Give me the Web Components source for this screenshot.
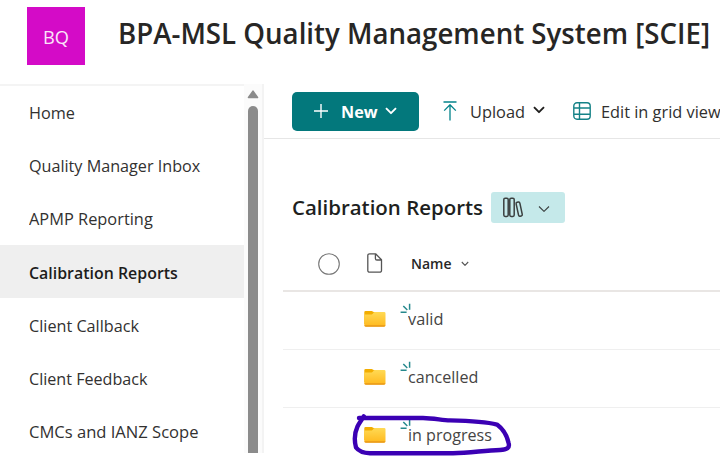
<!DOCTYPE html>
<html lang="en">
<head>
<meta charset="utf-8">
<title>Calibration Reports</title>
<style>
body{margin:0;background:#fff;font-family:"Open Sans","Noto Sans",sans-serif;overflow:hidden}
</style>
</head>
<body>
<site-page></site-page>
<script>
const define = (name, html, setup) => customElements.define(name, class extends HTMLElement {
  connectedCallback() {
    if (this.shadowRoot) return;
    this.attachShadow({mode: 'open'}).innerHTML = html;
    if (setup) setup(this, this.shadowRoot);
  }
});

// A one-line label condensed or widened to the width given in "w".
define('fit-text', `<style>
:host{display:block;flex:none;white-space:nowrap;line-height:24px}
span{display:inline-block;transform-origin:0 50%}
</style><span></span>`, (el, root) => {
  const s = root.querySelector('span'), w = +el.getAttribute('w');
  s.textContent = el.getAttribute('label');
  el.style.width = w + 'px';
  s.style.transform = `scaleX(${w / s.getBoundingClientRect().width})`;
});

const icons = {
  plus: [16, 16, '<path d="M8 1v14M1 8h14" stroke-width="1.4"/>'],
  chevron: [12, 8, '<path d="M1 1.2 6 6.2 11 1.2" stroke-width="1.9"/>'],
  thin: [12, 8, '<path d="M1 1.5 6 6.3 11 1.5" stroke-width="1.1"/>'],
  small: [8, 6, '<path d="M.8 1 4 4.3 7.2 1" stroke-width="1.1"/>'],
  upload: [14, 20, '<path d="M.5 1h13M7 19.5V4M1.2 9.6 7 3.8l5.8 5.8" stroke-width="1.3"/>'],
  grid: [18, 18, '<rect x=".8" y=".8" width="16.4" height="16.4" rx="3.2" stroke-width="1.4"/><path d="M6.5 1v16M1 6h16M1 12.2h16" stroke-width="1.4"/>'],
  books: [21, 21, '<g stroke-width="1.5"><rect x=".8" y="1.2" width="4.4" height="18.2" rx="1.3"/><rect x="6.8" y="1.2" width="4.4" height="18.2" rx="1.3"/><rect x="14.3" y="5" width="3.8" height="14.2" rx="1.3" transform="rotate(-12 16.2 12.1)"/></g>'],
  file: [16, 20, '<path d="M2.6.8h6l5.9 6v10.6a1.8 1.8 0 0 1-1.8 1.8H2.6A1.8 1.8 0 0 1 .8 17.4V2.6A1.8 1.8 0 0 1 2.6.8ZM8.4 1v4.4a1.6 1.6 0 0 0 1.6 1.6h4.4" stroke-width="1.3"/>'],
  circle: [22, 22, '<circle cx="11" cy="11" r="10.3" stroke-width="1.1"/>'],
  folder: [22, 18, '<defs><linearGradient id="g" x1="0" y1="0" x2="0" y2="1"><stop offset="0" stop-color="#ffda55"/><stop offset="1" stop-color="#ffb91e"/></linearGradient></defs><g stroke="none"><path d="M.3 2.3Q.3 1 1.6 1h6.1q.8 0 1.3.7L10 2H20v12H.3z" fill="#f2ad00"/><path d="M.3 4.4h7.5q.7 0 1.2-.8l.7-1.2q.3-.5 1-.5h9.5q1.3 0 1.3 1.3v12q0 1.3-1.3 1.3H1.6Q.3 16.5.3 15.2z" fill="url(#g)"/><path d="M.4 15.3h21q-.2 1.4-1.3 1.4H1.7Q.6 16.7.4 15.3z" fill="#e99819"/></g>'],
  spark: [12, 12, '<path d="M.6 9.3h6M3.3 3l4 4M9.6.8v6" stroke-width="1.5"/>'],
  up: [12, 9, '<path d="M6 1.2 10.5 7.5H1.5z" fill="#8b8b8b" stroke="#8b8b8b" stroke-width="1.6"/>']
};
define('ui-icon', `<style>:host{display:block;flex:none}svg{display:block;fill:none;stroke:currentColor;stroke-width:1.2;stroke-linejoin:round}</style>`, (el, root) => {
  const [w, h, d] = icons[el.getAttribute('name')];
  root.innerHTML += `<svg width="${w}" height="${h}" viewBox="0 0 ${w} ${h}">${d}</svg>`;
});

define('site-header', `<style>
:host{display:flex;height:84px;box-sizing:border-box;padding-left:27px;align-items:flex-start}
.logo{flex:none;width:58px;height:58px;margin-top:7px;background:#d40bc7;color:#fbe3f9;display:flex;align-items:center;justify-content:center;font-size:18.3px;padding-top:2px;box-sizing:border-box}
.title{font-size:28.8px;font-weight:600;color:#272625;margin:21px 0 0 33.4px}
</style><div class="logo"><fit-text w="26" label="BQ"></fit-text></div>
<fit-text class="title" w="592" label="BPA-MSL Quality Management System [SCIE]"></fit-text>`);

define('nav-item', `<style>
:host{display:flex;align-items:center;height:53.2px;padding:2.2px 0 0 28.8px;font-size:16.5px;color:#323130;box-sizing:border-box}
:host([selected]){background:#efefef;font-weight:600;color:#1d1c1b}
</style><slot></slot>`);

define('site-nav', `<style>
:host{display:grid;grid-template-columns:244px 18px;height:369px;overflow:hidden;border-right:2px solid #f3f3f3;box-sizing:border-box}
nav{border-top:2px solid #f4f4f4;height:367px;overflow:hidden}
nav-item:first-child{margin-top:-.6px}
.bar{background:#fbfbfb;display:flex;flex-direction:column;align-items:center;padding-top:6px}
.thumb{width:10.6px;flex:1;margin-top:7px;background:#8b8b8b;border-radius:5px 5px 0 0}
</style><nav>
<nav-item><fit-text w="46" label="Home"></fit-text></nav-item>
<nav-item><fit-text w="171.2" label="Quality Manager Inbox"></fit-text></nav-item>
<nav-item><fit-text w="123.8" label="APMP Reporting"></fit-text></nav-item>
<nav-item selected><fit-text w="148.8" label="Calibration Reports"></fit-text></nav-item>
<nav-item><fit-text w="110" label="Client Callback"></fit-text></nav-item>
<nav-item><fit-text w="118.5" label="Client Feedback"></fit-text></nav-item>
<nav-item><fit-text w="169.5" label="CMCs and IANZ Scope"></fit-text></nav-item>
</nav><div class="bar"><ui-icon name="up"></ui-icon><div class="thumb"></div></div>`);

define('command-bar', `<style>
:host{display:flex;align-items:center;height:54.5px;padding:1px 0 0 28px;box-sizing:border-box;border-bottom:1.5px solid #e6e6e6;font-size:16.5px;color:#302f2e}
.new{flex:none;display:flex;align-items:center;width:127px;height:39px;box-sizing:border-box;padding-left:21px;background:#03787c;color:#fff;border-radius:5px;font-weight:700}
.new fit-text{margin:2px 7.5px 0 11.5px}.new ui-icon{margin-top:-1px}
.up{color:#03838a;margin-left:24px}.t{margin:2px 0 0 12.5px}
.ch{margin:-3px 0 0 8.5px;color:#201f1e}.grid{color:#158287;margin-left:28px}
.e{margin-left:10px}
</style><div class="new"><ui-icon name="plus"></ui-icon><fit-text w="36.5" label="New"></fit-text><ui-icon name="chevron"></ui-icon></div>
<ui-icon class="up" name="upload"></ui-icon><fit-text class="t" w="55" label="Upload"></fit-text><ui-icon class="ch" name="chevron"></ui-icon>
<ui-icon class="grid" name="grid"></ui-icon><fit-text class="t e" w="119.6" label="Edit in grid view"></fit-text>`);

define('list-title', `<style>
:host{display:flex;align-items:center;padding:53px 0 0 27.6px;height:32px;font-size:20.3px;font-weight:600;color:#201f1e}
.view{flex:none;display:flex;align-items:center;width:74px;height:31px;box-sizing:border-box;margin-left:8.6px;padding-left:12px;background:#c5e9ea;border-radius:3px;color:#3b4040}
.view ui-icon+ui-icon{margin:2px 0 0 13.6px}
.head{margin-top:-2px}
</style><fit-text class="head" w="191" label="Calibration Reports"></fit-text><div class="view"><ui-icon name="books"></ui-icon><ui-icon name="thin"></ui-icon></div>`);

define('list-head', `<style>
:host{display:flex;align-items:center;height:68.2px;box-sizing:border-box;margin-left:19px;padding:14px 0 0 35px;border-bottom:2px solid #e9e6e4;font-size:14.6px;font-weight:600;color:#282726}
.c{color:#767676}.f{color:#555;margin:-1px 0 0 26.5px}fit-text{margin:-1px 0 0 28.4px}.s{color:#555;margin:1px 0 0 9.5px}
</style><ui-icon class="c" name="circle"></ui-icon><ui-icon class="f" name="file"></ui-icon><fit-text w="40.5" label="Name"></fit-text><ui-icon class="s" name="small"></ui-icon>`);

define('list-row', `<style>
:host{display:flex;align-items:center;height:58.1px;box-sizing:border-box;margin-left:19px;padding-left:80.6px;border-bottom:1px solid #efefef;font-size:16.2px;color:#454443}
:host(:last-of-type){border-color:transparent}
.sp{color:#26898d;margin:-22px -3.3px 0 14px}
ui-icon:first-of-type{margin-top:-3px}
::slotted(fit-text){margin-top:-3px}
</style><ui-icon name="folder"></ui-icon><ui-icon class="sp" name="spark"></ui-icon><slot></slot>`);

// Freehand loop drawn over the last row.
define('ink-mark', `<style>
:host{position:absolute;left:350px;top:412px;width:164px;height:45px;pointer-events:none}
svg{display:block}path{fill:none;stroke:#3b00b4;stroke-width:4.4;stroke-linecap:round;stroke-linejoin:round}
</style><svg width="164" height="45" viewBox="0 0 164 45"><path d="M9 6H73C84 6.2 92 8.2 100 8.4 118 8.8 137 10 147 12.6 153 17 157 24 158.6 31 160 36 157 37.8 150 38 134 38.6 120 40.8 103 41.2H20C14 41 9 39.6 6 35.5 4 28 4.5 21 7.5 14.5 9.5 10.5 12 7.5 13.8 4.3"/></svg>`);

define('site-page', `<style>
:host{display:block;width:720px;height:457px;overflow:hidden;position:relative}
.body{display:grid;grid-template-columns:263px 457px;height:373px}
site-nav{width:264px}
main{min-width:0;overflow:hidden;padding-left:1px}
</style><site-header></site-header><div class="body"><site-nav></site-nav><main>
<command-bar></command-bar><list-title></list-title><list-head></list-head>
<list-row><fit-text w="35.5" label="valid"></fit-text></list-row>
<list-row><fit-text w="70.3" label="cancelled"></fit-text></list-row>
<list-row><fit-text w="83.8" label="in progress"></fit-text></list-row>
</main></div><ink-mark></ink-mark>`);
</script>
</body>
</html>
